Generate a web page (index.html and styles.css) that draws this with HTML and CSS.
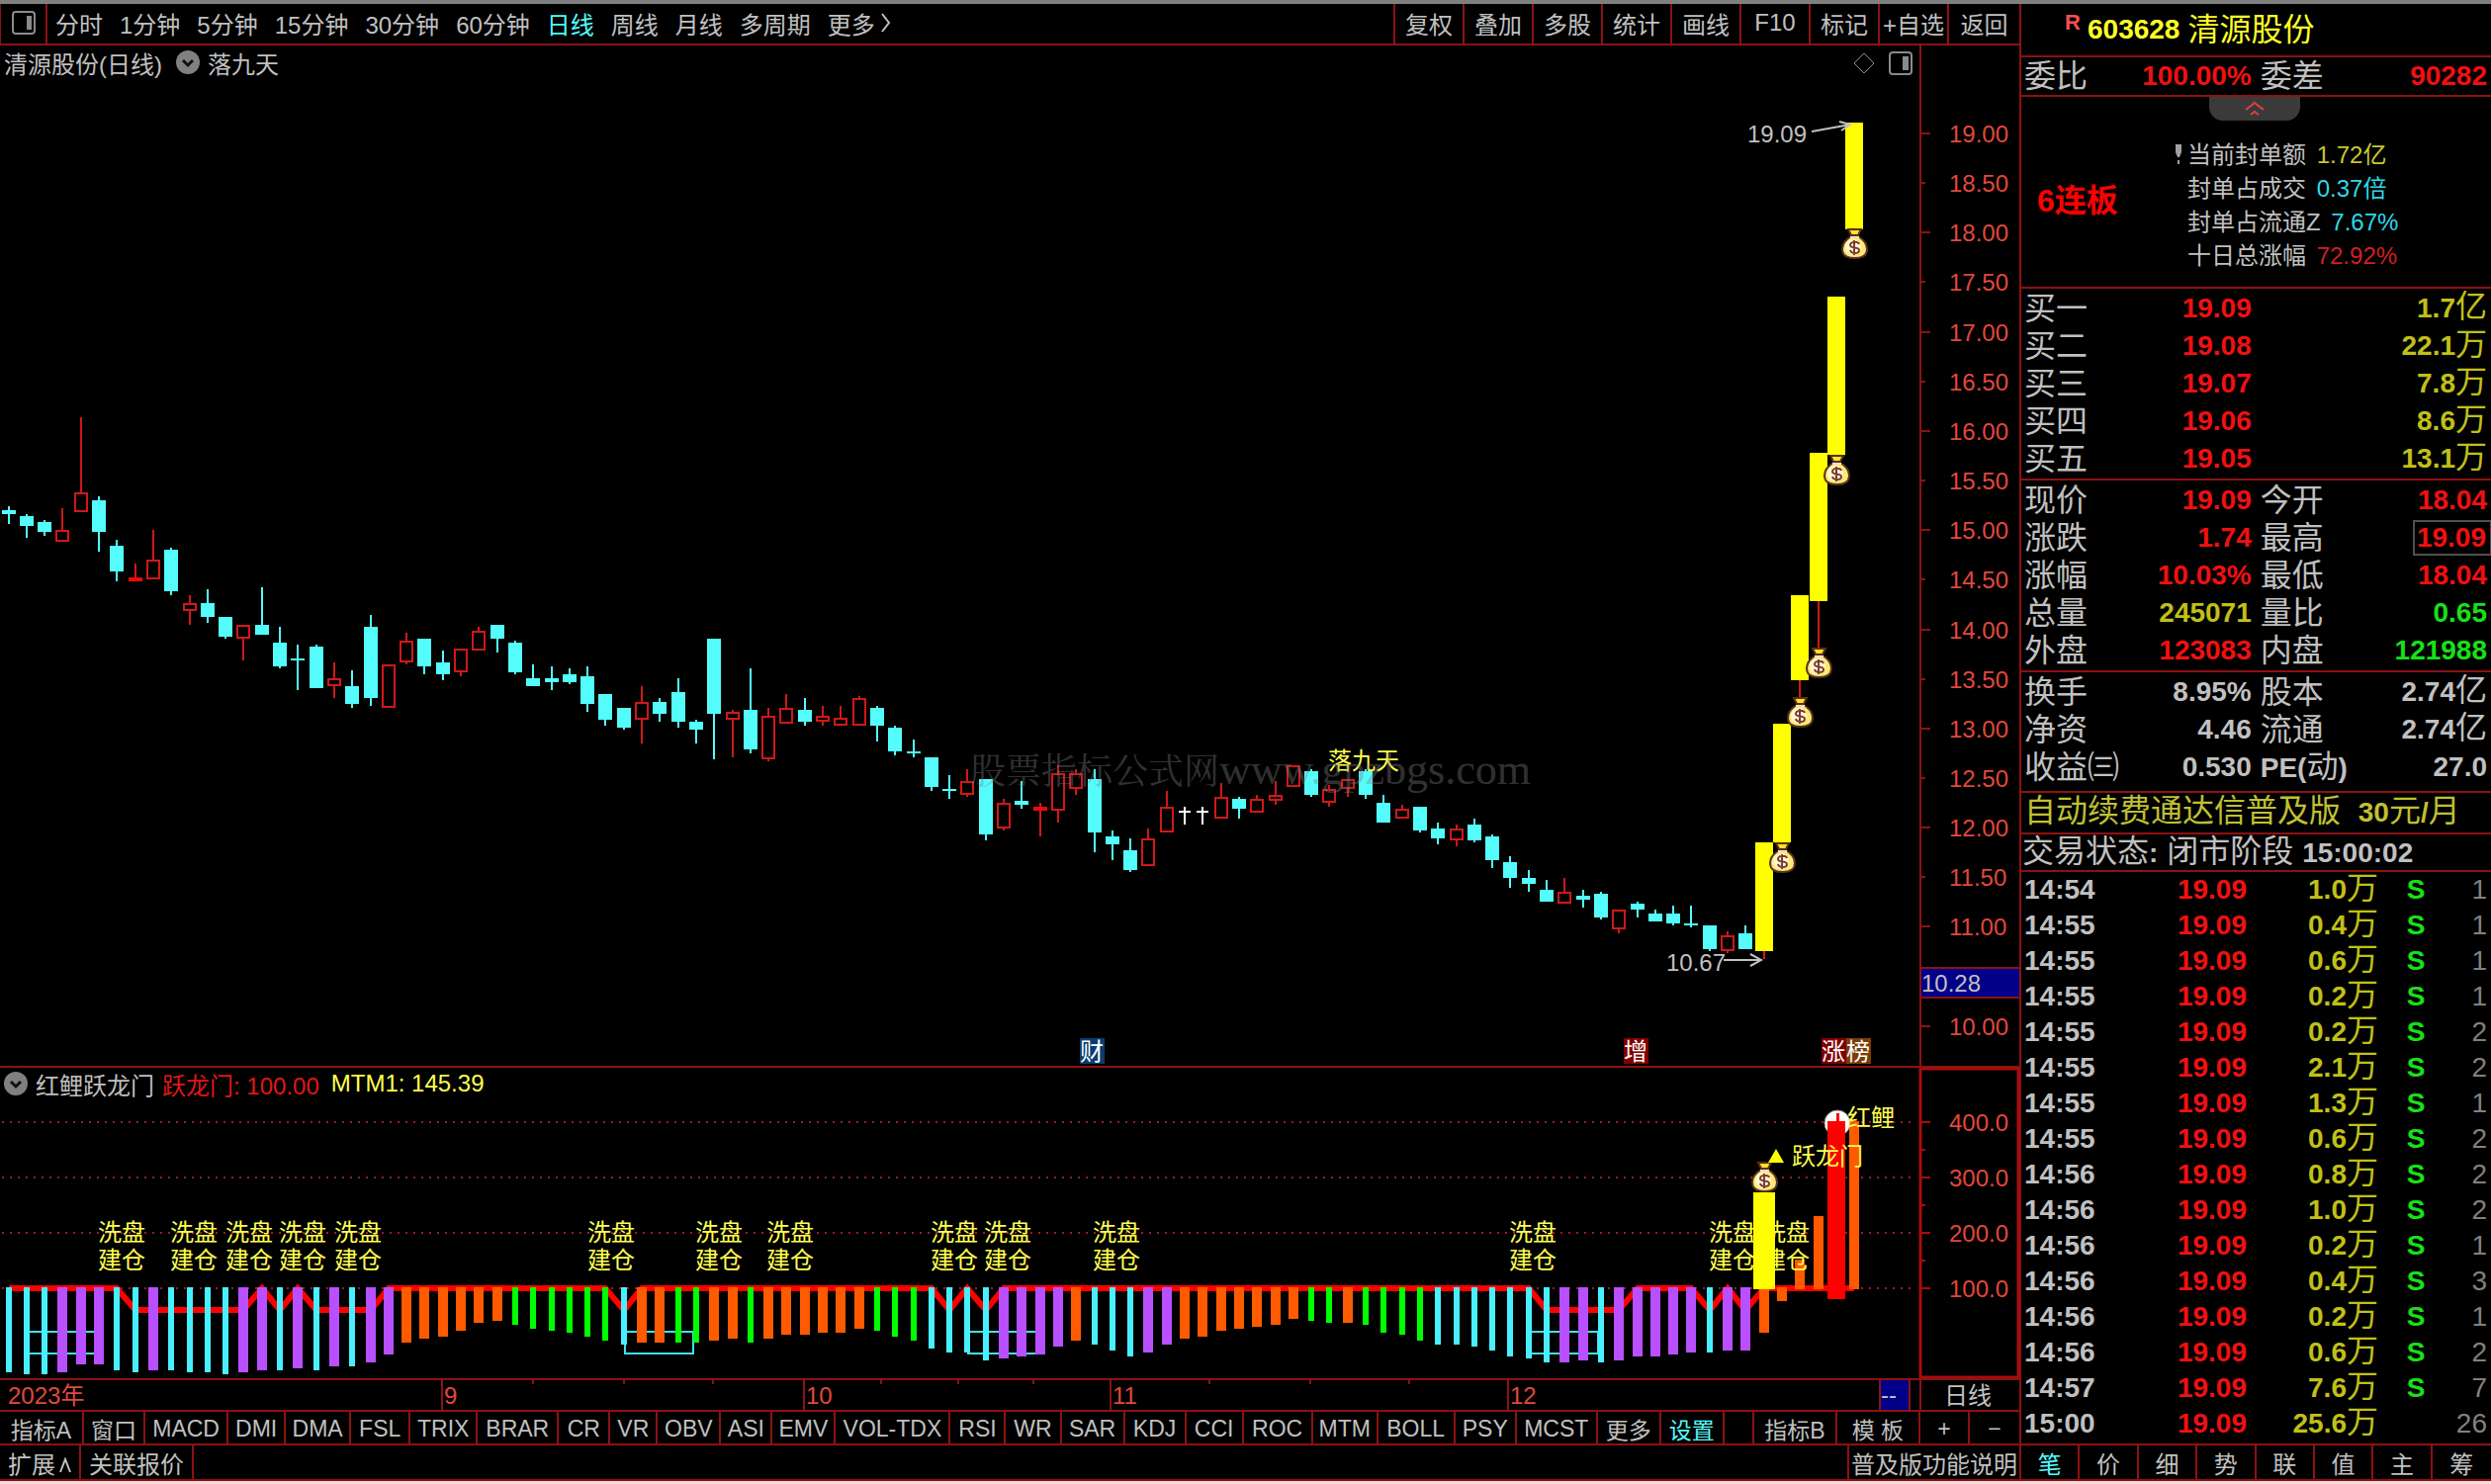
FILE: index.html
```html
<!DOCTYPE html>
<html lang="zh-CN">
<head>
    <meta charset="UTF-8">
    <meta name="viewport" content="width=device-width, initial-scale=1.0">
    <title>清源股份 603628</title>
    <link rel="stylesheet" href="styles.css">
</head>
<body>
    <div class="terminal">
        <main class="workspace">
            <nav class="toolbar">
                <button class="panel-btn" aria-label="侧栏">
                    <svg width="24" height="24" viewBox="0 0 24 24"><rect x="1" y="1" width="22" height="22" rx="3" fill="none" stroke="#8a8a8a" stroke-width="2"/><rect x="15" y="5" width="5" height="14" fill="#8a8a8a"/></svg>
                </button>
                <div class="periods">
                    <button>分时</button>
                    <button>1分钟</button>
                    <button>5分钟</button>
                    <button>15分钟</button>
                    <button>30分钟</button>
                    <button>60分钟</button>
                    <button class="active">日线</button>
                    <button>周线</button>
                    <button>月线</button>
                    <button>多周期</button>
                    <button class="more">更多
                        <svg width="10" height="20" viewBox="0 0 10 20"><path d="M1 1L8 10L1 19" fill="none" stroke="#c0c0c0" stroke-width="2"/></svg>
                    </button>
                </div>
                <div class="tools">
                    <button>复权</button>
                    <button>叠加</button>
                    <button>多股</button>
                    <button>统计</button>
                    <button>画线</button>
                    <button>F10</button>
                    <button>标记</button>
                    <button>+自选</button>
                    <button>返回</button>
                </div>
            </nav>

            <section class="chart">
                <div class="chart-title">
                    <span class="name">清源股份(日线)</span>
                    <svg class="drop" width="24" height="24" viewBox="0 0 24 24"><circle cx="12" cy="12" r="12" fill="#808080"/><path d="M7 10L12 15L17 10" fill="none" stroke="#111" stroke-width="3"/></svg>
                    <span>落九天</span>
                </div>
                <div class="chart-icons">
                    <svg width="22" height="22" viewBox="0 0 22 22"><path d="M11 1L21 11L11 21L1 11Z" fill="none" stroke="#8a8a8a" stroke-width="1"/></svg>
                    <svg width="24" height="24" viewBox="0 0 24 24"><rect x="1" y="1" width="22" height="22" rx="3" fill="none" stroke="#8a8a8a" stroke-width="2"/><rect x="14" y="5" width="6" height="14" fill="#8a8a8a"/></svg>
                </div>
                <svg id="klineChart" viewBox="0 46 2042 1032">
                    <defs>
                        <symbol id="bag" viewBox="0 0 27 31">
                            <path d="M7 1H20L17 7H10Z" fill="#ffe12e" stroke="#5a3010" stroke-width="2"/>
                            <path d="M10 8H17C22 11 26 15 26 21C26 28 21 30 13.5 30S1 28 1 21C1 15 5 11 10 8Z" fill="#ffe873" stroke="#5a3424" stroke-width="2"/>
                            <path d="M9 9H18" stroke="#f2dcd2" stroke-width="2"/>
                            <ellipse cx="12" cy="19" rx="8" ry="8" fill="#fff6cf"/>
                            <path d="M18 16C17 13 9 13 9 17C9 21 18 18 18 22C18 26 10 26 9 22M13 12V27" fill="none" stroke="#7a3c34" stroke-width="2"/>
                        </symbol>
                    </defs>
                </svg>
            </section>

            <section class="chart">
                <div class="chart-title indicator-title">
                    <svg class="drop" width="24" height="24" viewBox="0 0 24 24"><circle cx="12" cy="12" r="12" fill="#808080"/><path d="M7 10L12 15L17 10" fill="none" stroke="#111" stroke-width="3"/></svg>
                    <span>红鲤跃龙门</span>
                    <span class="out-red">跃龙门: 100.00</span>
                    <span class="out-yellow">MTM1: 145.39</span>
                </div>
                <svg id="indicatorChart" viewBox="0 1080 2042 314"></svg>
            </section>

            <section class="chart">
                <svg id="timeAxis" viewBox="0 1396 2042 30"></svg>
            </section>

            <nav class="indicators">
                <button>指标A</button>
                <button>窗口</button>
                <button>MACD</button>
                <button>DMI</button>
                <button>DMA</button>
                <button>FSL</button>
                <button>TRIX</button>
                <button>BRAR</button>
                <button>CR</button>
                <button>VR</button>
                <button>OBV</button>
                <button>ASI</button>
                <button>EMV</button>
                <button>VOL-TDX</button>
                <button>RSI</button>
                <button>WR</button>
                <button>SAR</button>
                <button>KDJ</button>
                <button>CCI</button>
                <button>ROC</button>
                <button>MTM</button>
                <button>BOLL</button>
                <button>PSY</button>
                <button>MCST</button>
                <button>更多</button>
                <button class="active">设置</button>
                <span></span>
                <button>指标B</button>
                <button>模 板</button>
                <button>+</button>
                <button>−</button>
            </nav>

            <footer class="bottom-bar">
                <button>扩展<svg width="12" height="16" viewBox="0 0 12 16"><path d="M1 15L6 2L11 15" fill="none" stroke="#c0c0c0" stroke-width="2"/></svg></button>
                <button>关联报价</button>
                <button class="help">普及版功能说明</button>
            </footer>
        </main>

        <aside class="quote">
            <header class="stock">
                <sup>R</sup>
                <b>603628</b>
                <span>清源股份</span>
            </header>

            <table class="rows single">
                <tr><th>委比</th><td class="up">100.00%</td><th>委差</th><td class="up">90282</td></tr>
            </table>

            <section class="limit">
                <button class="fold" aria-label="收起">
                    <svg width="20" height="16" viewBox="0 0 20 16"><path d="M1 9L10 2L19 9M6 14L10 11L14 14" fill="none" stroke="#e04040" stroke-width="2"/></svg>
                </button>
                <strong>6连板</strong>
                <ul>
                    <li><svg class="mark" width="6" height="20" viewBox="0 0 6 20"><path d="M0 0H6V8L4 13H2L0 8ZM2 16H4V20H2Z" fill="#a0a0a0"/></svg>当前封单额 <span class="yellow">1.72亿</span></li>
                    <li>封单占成交 <span class="cyan">0.37倍</span></li>
                    <li>封单占流通Z <span class="cyan">7.67%</span></li>
                    <li>十日总涨幅 <span class="red">72.92%</span></li>
                </ul>
            </section>

            <table class="rows">
                <tr><th>买一</th><td class="up">19.09</td><th></th><td class="vol">1.7<i>亿</i></td></tr>
                <tr><th>买二</th><td class="up">19.08</td><th></th><td class="vol">22.1<i>万</i></td></tr>
                <tr><th>买三</th><td class="up">19.07</td><th></th><td class="vol">7.8<i>万</i></td></tr>
                <tr><th>买四</th><td class="up">19.06</td><th></th><td class="vol">8.6<i>万</i></td></tr>
                <tr><th>买五</th><td class="up">19.05</td><th></th><td class="vol">13.1<i>万</i></td></tr>
            </table>

            <table class="rows">
                <tr><th>现价</th><td class="up">19.09</td><th>今开</th><td class="up">18.04</td></tr>
                <tr><th>涨跌</th><td class="up">1.74</td><th>最高</th><td class="up"><span class="boxed">19.09</span></td></tr>
                <tr><th>涨幅</th><td class="up">10.03%</td><th>最低</th><td class="up">18.04</td></tr>
                <tr><th>总量</th><td class="vol">245071</td><th>量比</th><td class="down">0.65</td></tr>
                <tr><th>外盘</th><td class="up">123083</td><th>内盘</th><td class="down">121988</td></tr>
            </table>

            <table class="rows last">
                <tr><th>换手</th><td>8.95%</td><th>股本</th><td>2.74<i>亿</i></td></tr>
                <tr><th>净资</th><td>4.46</td><th>流通</th><td>2.74<i>亿</i></td></tr>
                <tr><th>收益㈢</th><td>0.530</td><th><b>PE(</b>动<b>)</b></th><td>27.0</td></tr>
            </table>

            <p class="promo"><a href="#">自动续费通达信普及版&nbsp; <b>30</b>元<b>/</b>月</a></p>
            <p class="status">交易状态<b>:</b> 闭市阶段 <b>15:00:02</b></p>

            <table class="ticks">
                <tbody id="tickBody"></tbody>
            </table>

            <nav class="side-tabs">
                <button class="active">笔</button>
                <button>价</button>
                <button>细</button>
                <button>势</button>
                <button>联</button>
                <button>值</button>
                <button>主</button>
                <button>筹</button>
            </nav>
        </aside>
    </div>

    <script src="chart.js"></script>
</body>
</html>
```

FILE: styles.css
```css
* {
    box-sizing: border-box;
}

body {
    margin: 0;
    background-color: #f6dada;
    color: #c0c0c0;
    font-family: "Liberation Sans", "Noto Sans CJK SC", sans-serif;
    font-size: 24px;
}

button {
    background: none;
    border: none;
    margin: 0;
    padding: 0;
    color: inherit;
    font: inherit;
    white-space: nowrap;
    cursor: pointer;
}

button.active {
    color: #54fcfc;
}

table {
    border-collapse: collapse;
}

a {
    color: inherit;
    text-decoration: none;
}

.terminal {
    display: grid;
    grid-template-columns: 1fr 477px;
    background-color: #000;
    border-top: 4px solid #808080;
    margin-bottom: 3px;
}

.workspace {
    min-width: 0;
}

/* Top toolbar */
.toolbar {
    display: flex;
    height: 42px;
    border-bottom: 2px solid #8c1212;
}

.panel-btn {
    width: 48px;
    border-left: 1px solid #8c1212;
    border-right: 2px solid #8c1212;
    display: flex;
    align-items: center;
    justify-content: center;
}

.toolbar button {
    padding-bottom: 2px;
}

.periods {
    display: flex;
    gap: 17px;
    padding-left: 8px;
}

.more {
    display: flex;
    align-items: center;
    gap: 6px;
}

.tools {
    display: flex;
    margin-left: auto;
}

.tools button {
    width: 70px;
    border-left: 2px solid #8c1212;
}

.tools button:last-child {
    width: 73px;
}

/* Charts */
.chart {
    position: relative;
    border-bottom: 2px solid #8c1212;
}

.chart > svg {
    display: block;
    width: 100%;
    height: auto;
}

.chart-title {
    position: absolute;
    top: 0;
    left: 4px;
    height: 34px;
    display: flex;
    align-items: center;
    gap: 8px;
}

.chart-title .name {
    margin-right: 6px;
}

.indicator-title {
    height: 32px;
}

.out-red {
    color: #e01818;
}

.out-yellow {
    color: #ffff50;
    margin-left: 4px;
}

.chart-icons {
    position: absolute;
    top: 6px;
    right: 108px;
    display: flex;
    align-items: center;
    gap: 14px;
}

.chart text {
    font-size: 24px;
    fill: #c0c0c0;
}

.chart text.axis {
    fill: #e0483c;
}

.chart text.note {
    fill: #ffff50;
}

.chart text.badge {
    fill: #fff;
}

.chart text.watermark {
    font-family: "Liberation Serif", "Noto Serif CJK SC", "Noto Sans CJK SC", serif;
    font-size: 44px;
    fill: #808080;
    fill-opacity: 0.4;
}

.chart text.watermark .site-name {
    font-size: 36px;
}

/* Indicator tabs */
.indicators {
    display: grid;
    grid-template-columns: 85fr 62fr 84fr 58fr 66fr 60fr 68fr 82fr 52fr 48fr 64fr 52fr 64fr 116fr 56fr 56fr 64fr 62fr 58fr 70fr 66fr 78fr 62fr 82fr 64fr 64fr 30fr 84fr 84fr 50fr 50fr;
    height: 34px;
    font-size: 23px;
    border-bottom: 2px solid #8c1212;
}

.indicators > * {
    min-width: 0;
    border-right: 2px solid #8c1212;
}

.indicators > :last-child {
    border-right: none;
}

.bottom-bar {
    display: flex;
    height: 36px;
    border-bottom: 2px solid #8c1212;
}

.bottom-bar button {
    padding: 0 8px;
    border-right: 2px solid #8c1212;
}

.bottom-bar svg {
    margin-left: 4px;
}

.bottom-bar .help {
    margin-left: auto;
    padding: 0 2px;
    border-left: 2px solid #8c1212;
    border-right: none;
}

/* Quote panel */
.quote {
    border-left: 2px solid #8c1212;
    min-width: 0;
}

.stock {
    display: flex;
    align-items: center;
    height: 54px;
    padding-left: 44px;
    border-bottom: 2px solid #8c1212;
    color: #ffff28;
    font-size: 32px;
    line-height: 38px;
}

.stock sup {
    width: 23px;
    color: #f05050;
    font-size: 22px;
    font-weight: bold;
    line-height: 22px;
    align-self: flex-start;
    padding-top: 8px;
}

.stock b {
    font-size: 28px;
    margin-right: 8px;
}

.rows {
    width: 100%;
    table-layout: fixed;
    border-bottom: 2px solid #8c1212;
    border-collapse: separate;
    border-spacing: 0;
    padding: 1px 0;
}

.rows.single {
    padding: 0;
}

.rows.last {
    padding-bottom: 5px;
}

.rows th,
.rows td {
    height: 38px;
    padding: 0;
    line-height: 32px;
    white-space: nowrap;
}

.rows th {
    width: 22%;
    padding-left: 3px;
    font-size: 32px;
    font-weight: normal;
    text-align: left;
}

.rows th:nth-child(3) {
    width: 23%;
    padding-left: 9px;
}

.rows th b,
.promo b,
.status b {
    font-size: 28px;
}

.rows td {
    width: 27%;
    font-size: 28px;
    font-weight: bold;
    text-align: right;
}

.rows td:last-child {
    width: 28%;
    padding-right: 4px;
}

.rows i,
.ticks i {
    font-size: 32px;
    font-style: normal;
    font-weight: normal;
    line-height: 24px;
}

.rows .up {
    color: #f01010;
}

.rows .down {
    color: #18e018;
}

.rows .vol {
    color: #c0c018;
}

.boxed {
    display: inline-block;
    height: 36px;
    padding: 0 4px 0 2px;
    margin-right: -4px;
    border: 2px solid #505050;
    border-right-width: 1px;
    line-height: 32px;
    vertical-align: middle;
}

.limit {
    position: relative;
    display: flex;
    align-items: center;
    height: 194px;
    padding: 20px 0 0 16px;
    border-bottom: 2px solid #8c1212;
}

.limit strong {
    width: 152px;
    margin-bottom: 8px;
    color: #ff0000;
    font-size: 32px;
}

.limit ul {
    margin: 8px 0 0;
    padding: 0;
    list-style: none;
}

.limit li {
    position: relative;
    height: 34px;
    line-height: 34px;
    white-space: nowrap;
}

.limit span {
    padding-left: 4px;
}

.mark {
    position: absolute;
    left: -12px;
    top: 6px;
}

.fold {
    position: absolute;
    top: 0;
    left: 190px;
    width: 92px;
    height: 24px;
    background-color: #3a3a3a;
    border-radius: 0 0 14px 14px;
    line-height: 16px;
}

.yellow {
    color: #c8c830;
}

.cyan {
    color: #30d8e8;
}

.red {
    color: #d02020;
}

.promo,
.status {
    margin: 0;
    border-bottom: 2px solid #8c1212;
    font-size: 32px;
    white-space: nowrap;
}

.promo {
    height: 42px;
    padding-left: 3px;
    line-height: 36px;
    color: #c0c030;
}

.status {
    height: 38px;
    padding-left: 1px;
    line-height: 34px;
}

.ticks {
    width: 100%;
    table-layout: fixed;
    border-collapse: separate;
    border-spacing: 0;
    padding-bottom: 2px;
    border-bottom: 2px solid #8c1212;
}

.ticks td {
    height: 36px;
    padding: 0;
    font-size: 28px;
    font-weight: bold;
    line-height: 32px;
    text-align: right;
    white-space: nowrap;
}

.ticks td:nth-child(1) {
    width: 25%;
    padding-left: 3px;
    text-align: left;
}

.ticks td:nth-child(2) {
    width: 23%;
    color: #f01010;
}

.ticks td:nth-child(3) {
    width: 28%;
    color: #c0c018;
}

.ticks td:nth-child(4) {
    width: 10%;
    color: #18e018;
}

.ticks td:nth-child(5) {
    width: 14%;
    padding-right: 4px;
    color: #808080;
    font-weight: normal;
}

.side-tabs {
    display: grid;
    grid-template-columns: repeat(8, 1fr);
    height: 36px;
    border-bottom: 2px solid #8c1212;
}

.side-tabs button {
    border-right: 2px solid #8c1212;
}

.side-tabs button:last-child {
    border-right: none;
}
```

FILE: chart.js
```js
const CYAN = '#54fcfc';
const RED = '#d01818';
const LINE = '#8c1212';

// One bar every 18.3 px, first one centred on x = 9
function barX(i) {
    return Math.floor(9 + i * 18.3);
}

function rect(x, y, w, h, fill) {
    return `<rect x="${x}" y="${y}" width="${w}" height="${h}" fill="${fill}"/>`;
}

function outline(x, y, w, h, stroke) {
    return `<rect x="${x + 1}" y="${y + 1}" width="${w - 2}" height="${h - 2}" fill="none" stroke="${stroke}" stroke-width="2"/>`;
}

function text(x, y, content, cls) {
    return `<text x="${x}" y="${y}" class="${cls || ''}">${content}</text>`;
}

function bag(x, y) {
    return `<use href="#bag" x="${x - 13}" y="${y}" width="27" height="31"/>`;
}

// kind, high, body top, body bottom, low
// c = down, r = up, f = flat up, w = doji, y = limit up
const candles = [
    ['c', 512, 516, 520, 530], ['c', 520, 522, 532, 544], ['c', 526, 528, 538, 542], ['r', 514, 536, 548, 548],
    ['r', 422, 498, 518, 518], ['c', 502, 506, 538, 558], ['c', 546, 552, 578, 588], ['f', 570, 584, 588, 588],
    ['r', 536, 566, 586, 586], ['c', 554, 556, 598, 602], ['r', 602, 610, 618, 632], ['c', 596, 610, 624, 630],
    ['c', 624, 624, 644, 646], ['r', 632, 632, 646, 668], ['c', 594, 632, 642, 642], ['c', 634, 650, 674, 676],
    ['c', 652, 666, 668, 698], ['c', 652, 654, 696, 696], ['r', 670, 686, 694, 706], ['c', 678, 694, 712, 716],
    ['c', 622, 634, 706, 714], ['r', 672, 672, 716, 716], ['r', 640, 648, 670, 672], ['c', 646, 646, 674, 682],
    ['c', 658, 670, 682, 688], ['r', 656, 656, 680, 684], ['r', 634, 638, 658, 658], ['c', 632, 632, 646, 660],
    ['c', 648, 650, 680, 682], ['c', 672, 686, 694, 694], ['c', 674, 686, 690, 698], ['c', 676, 682, 690, 692],
    ['c', 674, 684, 712, 720], ['c', 702, 702, 728, 734], ['c', 716, 716, 736, 738], ['r', 694, 710, 728, 752],
    ['c', 706, 710, 722, 730], ['c', 686, 700, 730, 736], ['c', 728, 730, 738, 752], ['c', 646, 646, 722, 768],
    ['r', 718, 720, 728, 766], ['c', 676, 718, 758, 762], ['r', 716, 724, 768, 770], ['r', 702, 716, 732, 732],
    ['c', 706, 718, 730, 734], ['r', 714, 724, 730, 734], ['r', 714, 726, 734, 734], ['r', 704, 706, 734, 734],
    ['c', 714, 716, 734, 750], ['c', 734, 736, 760, 764], ['c', 748, 760, 762, 766], ['c', 766, 766, 796, 800],
    ['c', 784, 798, 800, 808], ['r', 778, 790, 804, 806], ['c', 788, 788, 844, 850], ['r', 808, 812, 838, 840],
    ['c', 790, 810, 814, 818], ['f', 812, 816, 820, 846], ['r', 774, 782, 820, 832], ['r', 778, 782, 798, 804],
    ['c', 778, 788, 842, 862], ['c', 840, 846, 854, 870], ['c', 848, 860, 880, 882], ['r', 838, 848, 876, 876],
    ['r', 800, 816, 842, 842], ['w', 816, 820, 822, 834], ['w', 816, 820, 822, 834], ['r', 792, 806, 828, 828],
    ['c', 806, 808, 818, 828], ['r', 804, 808, 822, 822], ['r', 790, 804, 810, 814], ['r', 774, 774, 796, 796],
    ['c', 778, 780, 804, 806], ['r', 794, 798, 812, 816], ['r', 788, 788, 798, 806], ['c', 778, 780, 804, 808],
    ['c', 804, 812, 832, 832], ['r', 814, 818, 828, 828], ['c', 816, 816, 840, 842], ['c', 832, 838, 848, 854],
    ['r', 834, 838, 850, 856], ['c', 828, 834, 850, 852], ['c', 844, 846, 870, 878], ['c', 866, 872, 888, 898],
    ['c', 880, 888, 894, 902], ['c', 890, 900, 912, 912], ['r', 888, 902, 914, 914], ['c', 900, 906, 910, 918],
    ['c', 902, 904, 928, 930], ['r', 920, 920, 940, 944], ['c', 912, 914, 920, 928], ['c', 920, 924, 932, 932],
    ['c', 916, 924, 934, 936], ['c', 916, 934, 936, 938], ['c', 936, 936, 960, 962], ['r', 942, 946, 962, 964],
    ['c', 936, 944, 960, 960], ['y', 852, 852, 962, 970], ['y', 732, 732, 852, 852], ['y', 602, 602, 688, 705],
    ['y', 458, 458, 608, 655], ['y', 300, 300, 460, 460], ['y', 124, 124, 232, 232]
];

function drawKline() {
    let out = '';

    candles.forEach(([kind, high, top, bottom, low], i) => {
        const x = barX(i);
        const color = kind === 'c' ? CYAN : kind === 'w' ? '#ffffff' : RED;
        if (top > high) out += rect(x - 1, high, 2, top - high, color);
        if (low > bottom) out += rect(x - 1, bottom, 2, low - bottom, color);
        if (kind === 'r') {
            out += outline(x - 7, top, 14, bottom - top, color);
        } else if (kind === 'y') {
            out += rect(x - 9, top, 18, bottom - top, '#ffff00');
        } else if (kind === 'w') {
            out += rect(x - 6, top, 12, 2, color);
        } else {
            out += rect(x - 7, top, 14, bottom - top, kind === 'f' ? '#f00808' : color);
        }
    });

    out += bag(barX(98), 852) + bag(barX(99), 705) + bag(barX(100), 655) + bag(barX(101), 460) + bag(barX(102), 231);

    out += text(1343, 778, '落九天', 'note');
    out += text(981, 793, '<tspan class="site-name">股票指标公式网</tspan>www.gpzbgs.com', 'watermark');

    // High and low of the visible range
    out += text(1767, 144, '19.09');
    out += `<path d="M1832 133L1871 126M1860 123L1871 126L1862 132" fill="none" stroke="#c0c0c0" stroke-width="2"/>`;
    out += text(1685, 982, '10.67');
    out += `<path d="M1743 971H1781M1770 965L1781 971L1770 977" fill="none" stroke="#c0c0c0" stroke-width="2"/>`;

    [[1092, '财', '#0a3c70'], [1642, '增', '#800000'], [1842, '涨', '#800000'], [1867, '榜', '#7c3c08']].forEach(([x, label, bg]) => {
        out += rect(x, 1050, 25, 26, bg) + text(x, 1072, label, 'badge');
    });

    // Price axis
    out += rect(1941, 46, 2, 1032, LINE);
    for (let p = 19; p >= 10; p -= 0.5) {
        const y = Math.round(135 + (19 - p) * 1003 / 10);
        if (p !== 10.5) {
            out += rect(1943, y - 1, Number.isInteger(p) ? 9 : 4, 2, LINE);
            out += text(1971, y + 9, p.toFixed(2), 'axis');
        }
    }
    out += rect(1943, 978, 99, 32, LINE) + rect(1943, 980, 99, 28, '#000088') + text(1943, 1003, '10.28');

    document.getElementById('klineChart').innerHTML += out;
}

// kind and bottom of each bar below the 100 line
const bars = ('c1388 c1390 c1390 p1388 p1380 p1380 c1386 c1388 p1386 c1386 c1388 c1388 c1390 p1388 p1386 c1386 p1384 c1386 ' +
    'p1382 c1382 p1378 p1370 o1358 o1354 o1352 o1346 o1338 o1336 g1340 g1344 g1346 g1348 g1352 g1356 c1360 o1358 ' +
    'o1358 g1358 g1358 o1356 o1354 g1358 o1354 o1350 o1350 o1348 o1348 o1344 g1346 g1352 g1356 c1364 c1368 c1368 ' +
    'c1376 p1374 p1372 p1370 p1362 o1356 c1360 c1366 c1372 p1368 p1360 o1354 o1352 o1346 o1344 o1342 o1340 o1334 ' +
    'g1336 g1338 o1338 g1340 g1348 g1350 g1356 c1360 c1360 c1362 c1366 c1372 c1374 c1378 p1378 p1376 c1378 p1376 ' +
    'p1372 p1372 p1370 p1368 c1368 p1366 p1366 o1348 o1316').split(' ');
const barStyle = { c: ['#48f0ff', 6], p: ['#b850ff', 10], o: ['#ff5a00', 10], g: ['#00ff00', 6] };

const lowPoints = [7, 8, 9, 10, 11, 12, 13, 15, 17, 18, 19, 20, 34, 52, 54, 85, 86, 87, 88, 89, 94, 96];

function drawIndicator() {
    let out = '';

    [1135, 1191, 1247, 1303].forEach(y => {
        out += `<path d="M2 ${y}H1936" stroke="#a01830" stroke-width="2" stroke-dasharray="2 6"/>`;
    });

    const points = [];
    for (let i = 0; i < 103; i++) {
        points.push(barX(i) + ',' + (lowPoints.includes(i) ? 1325 : 1303));
    }
    out += `<polyline points="${points.join(' ')}" fill="none" stroke="#ff0000" stroke-width="6"/>`;

    [1, 34, 53, 84].forEach(i => {
        out += outline(barX(i), 1346, 71, 24, '#40e0f0');
    });

    bars.forEach((bar, i) => {
        const [color, width] = barStyle[bar[0]];
        out += rect(barX(i) - width / 2, 1302, width, bar.slice(1) - 1302, color);
    });

    out += rect(barX(99) - 5, 1274, 10, 30, '#ff5a00');
    out += rect(barX(100) - 5, 1230, 10, 74, '#ff5a00');
    out += rect(barX(102) - 5, 1134, 10, 170, '#ff5a00');

    [99, 172, 228, 282, 338, 594, 703, 775, 941, 995, 1105, 1526, 1728, 1782].forEach(x => {
        out += text(x, 1255, '洗盘', 'note') + text(x, 1283, '建仓', 'note');
    });

    out += rect(barX(97) - 11, 1206, 22, 98, '#ffff00') + bag(barX(97), 1175);
    out += '<path d="M1796 1162L1804 1176H1788Z" fill="#ffff00"/>';

    out += '<circle cx="1858" cy="1136" r="13" fill="#ffffff" stroke="#909090"/>';
    out += rect(1857, 1126, 3, 9, '#ff0000') + rect(barX(101) - 9, 1134, 18, 180, '#ff0000');

    out += text(1868, 1139, '红鲤', 'note') + text(1812, 1178, '跃龙门', 'note');

    // Axis frame
    out += '<rect x="1942" y="1081" width="99" height="312" fill="none" stroke="#a80c0c" stroke-width="3"/>';
    [400, 300, 200, 100].forEach((value, i) => {
        const y = 1135 + i * 56;
        out += rect(1943, y - 1, 9, 2, '#a80c0c') + text(1971, y + 9, value.toFixed(1), 'axis');
        if (i < 3) out += rect(1943, y + 27, 4, 2, '#a80c0c');
    });

    document.getElementById('indicatorChart').innerHTML = out;
}

function drawTimeAxis() {
    let out = text(8, 1420, '2023年', 'axis');

    [[447, '9'], [813, '10'], [1123, '11'], [1525, '12']].forEach(([x, month]) => {
        out += rect(x - 1, 1396, 2, 30, LINE) + text(x + 2, 1420, month, 'axis');
    });
    [539, 631, 721, 891, 969, 1045, 1223, 1325, 1425].forEach(x => {
        out += rect(x - 1, 1396, 2, 4, LINE);
    });

    out += rect(1900, 1396, 32, 30, LINE) + rect(1902, 1396, 28, 30, '#000088') + text(1902, 1419, '--');
    out += rect(1941, 1396, 2, 30, LINE) + text(1966, 1420, '日线');

    document.getElementById('timeAxis').innerHTML = out;
}

const ticks = [
    ['14:54', '1.0', 'S', 1], ['14:55', '0.4', 'S', 1], ['14:55', '0.6', 'S', 1], ['14:55', '0.2', 'S', 1],
    ['14:55', '0.2', 'S', 2], ['14:55', '2.1', 'S', 2], ['14:55', '1.3', 'S', 1], ['14:55', '0.6', 'S', 2],
    ['14:56', '0.8', 'S', 2], ['14:56', '1.0', 'S', 2], ['14:56', '0.2', 'S', 1], ['14:56', '0.4', 'S', 3],
    ['14:56', '0.2', 'S', 1], ['14:56', '0.6', 'S', 2], ['14:57', '7.6', 'S', 7], ['15:00', '25.6', '', 26]
];

function fillTicks() {
    document.getElementById('tickBody').innerHTML = ticks.map(([time, volume, side, count]) => `
        <tr>
            <td>${time}</td>
            <td>19.09</td>
            <td>${volume}<i>万</i></td>
            <td>${side}</td>
            <td>${count}</td>
        </tr>
    `).join('');
}

drawKline();
drawIndicator();
drawTimeAxis();
fillTicks();
```
